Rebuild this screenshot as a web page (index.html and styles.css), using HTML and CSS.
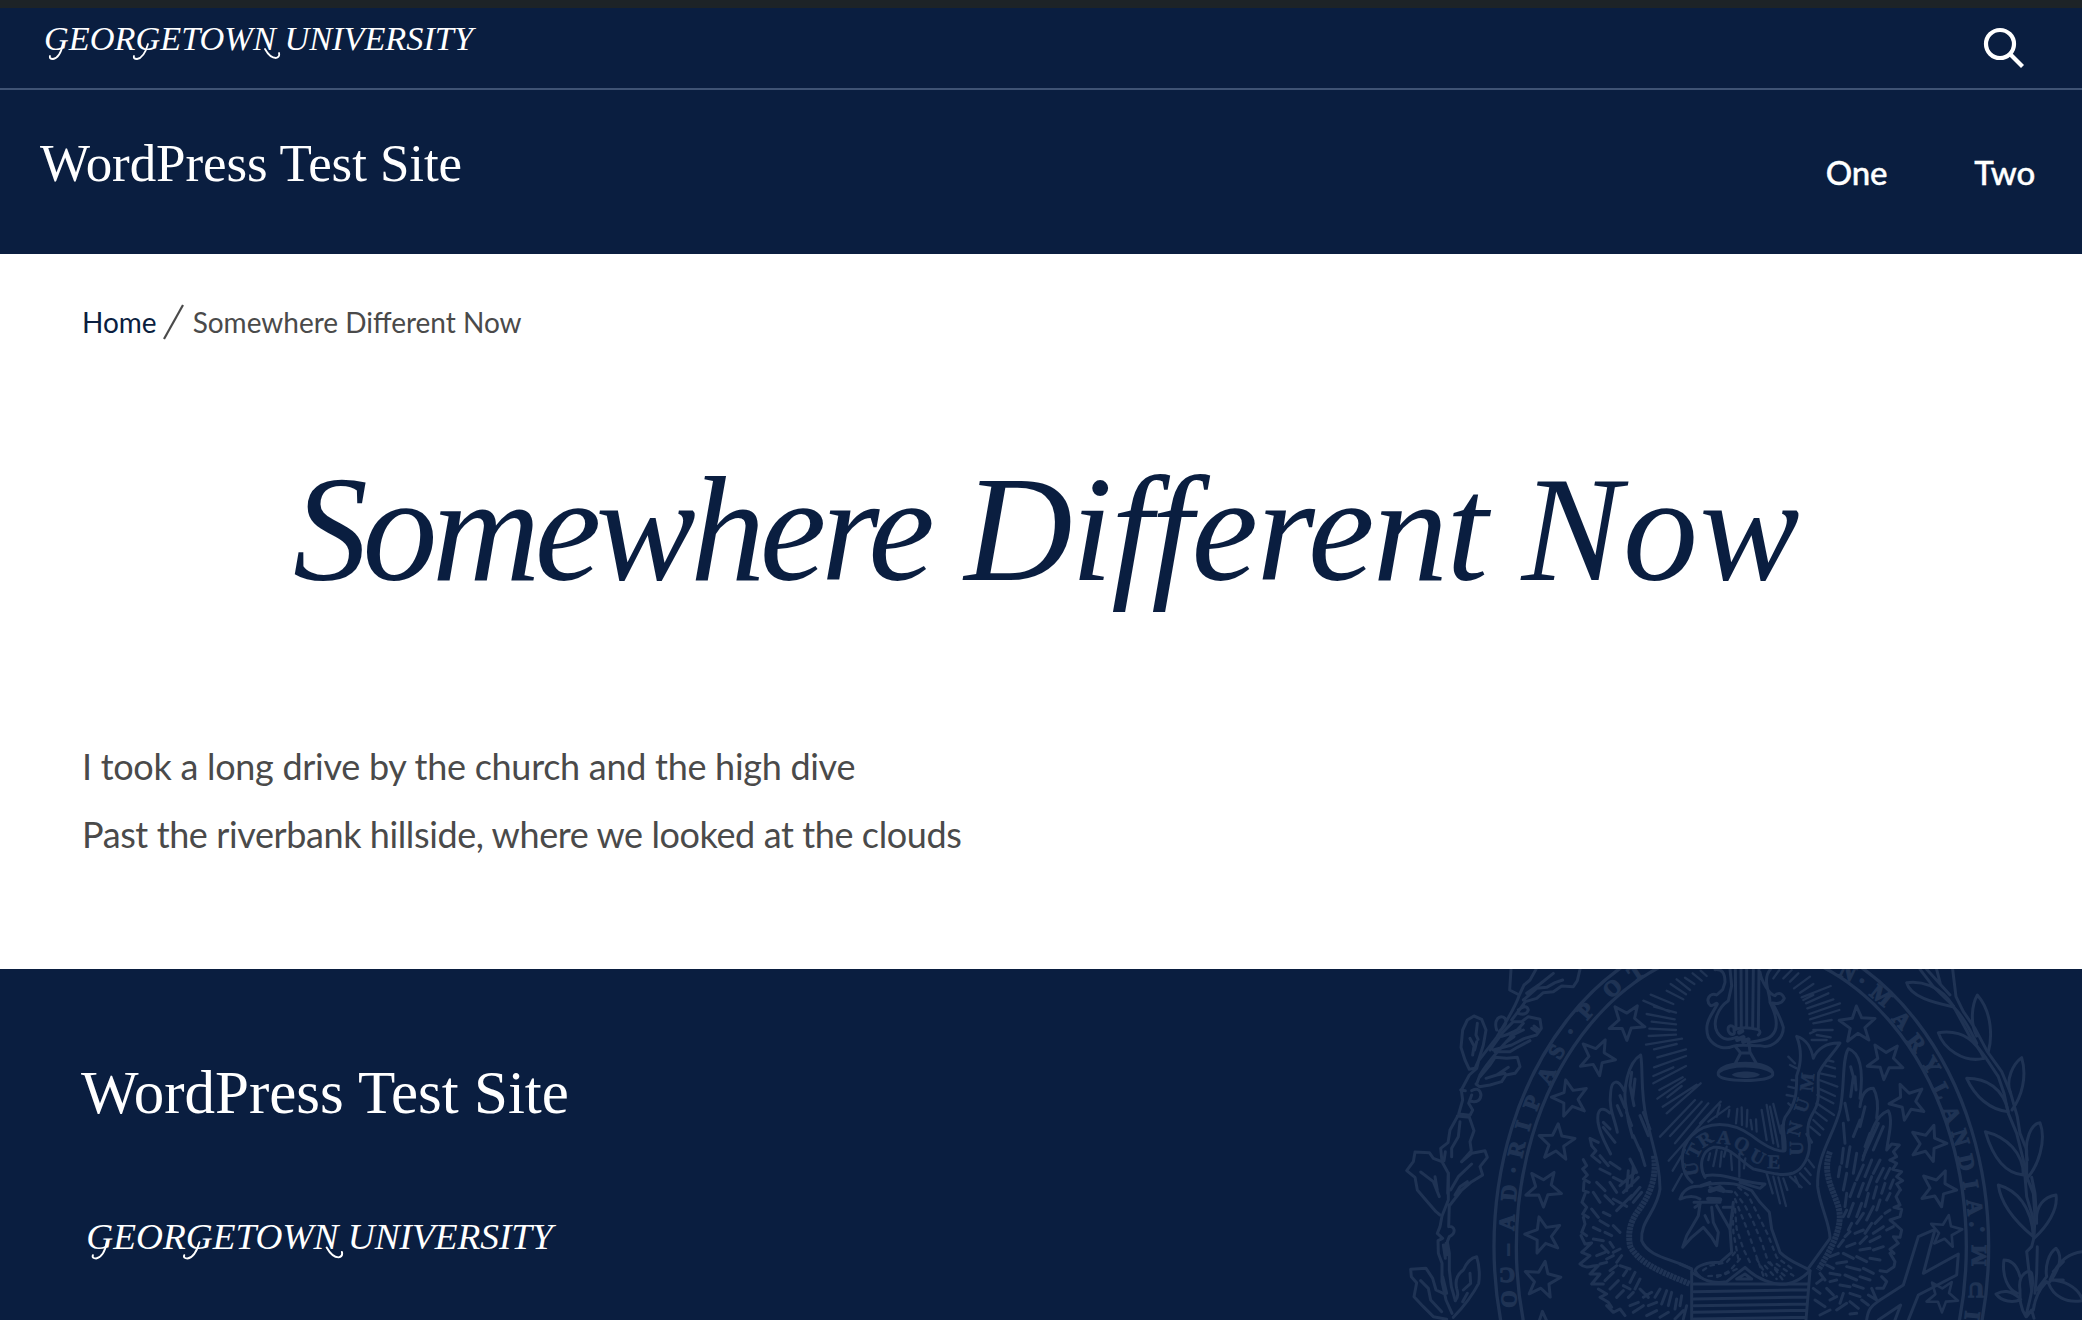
FILE: index.html
```html
<!DOCTYPE html>
<html lang="en">
<head>
<meta charset="utf-8">
<title>Somewhere Different Now</title>
<link rel="stylesheet" href="styles.css">
</head>
<body>
<div class="admin-bar"></div>
<header class="header">
  <div class="header-top">
    <svg class="wordmark" width="440" height="80" viewBox="0 0 440 80"><text x="1" y="42" font-size="33" textLength="429" lengthAdjust="spacingAndGlyphs">GEORGETOWN UNIVERSITY</text><path class="swash" d="M20 36Q17 50 10 51 6 51 7 48M105 36Q101 50 94 51 90 51 91 48M222 41Q227 50 233 50 237 49 236 45"/></svg>
    <svg class="search" width="44" height="44" viewBox="0 0 44 44"><circle cx="18" cy="18" r="14"/><path d="M28 28L40.500 40.500"/></svg>
  </div>
  <div class="header-main">
    <a class="site-title">WordPress Test Site</a>
    <nav class="nav"><a>One</a><a>Two</a></nav>
  </div>
</header>
<main class="main">
  <div class="crumbs">
    <a class="crumb-link">Home</a>
    <svg class="crumb-sep" width="24" height="38" viewBox="0 0 24 38"><path d="M2 36L21 2"/></svg>
    <span>Somewhere Different Now</span>
  </div>
  <h1 class="title"><span class="tight">Somewhere</span> <span class="wide">Different</span> <span class="wider">Now</span></h1>
  <div class="content">
    <p>I took a long drive by the church and the high dive</p>
    <p class="snug">Past the riverbank hillside, where we looked at the clouds</p>
  </div>
</main>
<footer class="footer">
  <div class="footer-info">
    <a class="footer-title">WordPress Test Site</a>
    <svg class="wordmark" width="479" height="87" viewBox="0 0 440 80"><text x="1" y="42" font-size="33" textLength="429" lengthAdjust="spacingAndGlyphs">GEORGETOWN UNIVERSITY</text><path class="swash" d="M20 36Q17 50 10 51 6 51 7 48M105 36Q101 50 94 51 90 51 91 48M222 41Q227 50 233 50 237 49 236 45"/></svg>
  </div>
  <svg class="seal" width="702" height="351" viewBox="0 27 2106 1053">
    <defs><path id="star" d="M0-54L14-18 54-14 22 12 32 50 0 28-32 50-22 12-54-14-14-18Z"/></defs>
    <!-- ring -->
    <g class="ring"><ellipse cx="1084" cy="860" rx="742" ry="958"/><ellipse cx="1084" cy="860" rx="675" ry="900"/></g>
    <g class="letters">
      <text transform="translate(388 1017) rotate(94)">O</text>
      <text transform="translate(381 945) rotate(180)">C</text>
      <text transform="translate(378 869) rotate(-90)">–</text>
      <text transform="translate(380 788) rotate(-88)">A</text>
      <text transform="translate(386 698) rotate(-85)">D</text>
      <text transform="translate(400 630) rotate(-80)">·</text>
      <text transform="translate(409 567) rotate(-77)">R</text>
      <text transform="translate(428 497) rotate(-74)">I</text>
      <text transform="translate(455 428) rotate(-70)">P</text>
      <text transform="translate(498 345) rotate(-64)">A</text>
      <text transform="translate(529 274) rotate(-60)">S</text>
      <text transform="translate(571 214) rotate(-54)">·</text>
      <text transform="translate(617 152) rotate(-49)">P</text>
      <text transform="translate(696 84) rotate(-42)">O</text>
      <text transform="translate(768 36) rotate(-34)">T</text>
      <text transform="translate(1403 35) rotate(26)">N</text>
      <text transform="translate(1446 62) rotate(34)">·</text>
      <text transform="translate(1504 106) rotate(39)">M</text>
      <text transform="translate(1566 180) rotate(47)">A</text>
      <text transform="translate(1610 248) rotate(52)">R</text>
      <text transform="translate(1654 315) rotate(58)">Y</text>
      <text transform="translate(1685 392) rotate(63)">L</text>
      <text transform="translate(1715 463) rotate(68)">A</text>
      <text transform="translate(1742 532) rotate(73)">N</text>
      <text transform="translate(1760 608) rotate(77)">D</text>
      <text transform="translate(1773 674) rotate(80)">I</text>
      <text transform="translate(1784 742) rotate(84)">A</text>
      <text transform="translate(1774 790)">·</text><text transform="translate(1807 805)">·</text>
      <text transform="translate(1794 886) rotate(-90)">M</text>
      <text transform="translate(1788 990) rotate(180)">U</text>
      <text transform="translate(1776 1066) rotate(-84)">I</text>
    </g>
    <!-- stars -->
    <g class="line">
      <use href="#star" transform="translate(742 182) rotate(34)"/>
      <use href="#star" transform="translate(652 288) rotate(26)"/>
      <use href="#star" transform="translate(570 412) rotate(-14)"/>
      <use href="#star" transform="translate(530 545) rotate(5)"/>
      <use href="#star" transform="translate(492 682) rotate(34)"/>
      <use href="#star" transform="translate(490 823) rotate(-14)"/>
      <use href="#star" transform="translate(487 957) rotate(9)"/>
      <use href="#star" transform="translate(490 1108) rotate(-3)"/>
      <use href="#star" transform="translate(1432 192) rotate(-3)"/>
      <use href="#star" transform="translate(1518 300) rotate(39)"/>
      <use href="#star" transform="translate(1582 422) rotate(-24)"/>
      <use href="#star" transform="translate(1645 547) rotate(18)"/>
      <use href="#star" transform="translate(1675 682) rotate(23)"/>
      <use href="#star" transform="translate(1698 812) rotate(10) scale(.88)"/>
      <use href="#star" transform="translate(1688 1005) rotate(35) scale(.88)"/>
    </g>
    <!-- oak branch -->
    <g class="line">
      <path d="M393 28L389 90 418 105 432 75 450 60 468 28M418 105C405 145 375 190 350 232L296 302 290 325 268 345 244 390 248 420 236 462 270 466 278 450 266 430 275 405M290 372L300 345C320 310 345 285 370 255L430 190M600 28L592 62 580 80 545 78 520 95 490 98 470 115 436 125 418 150 395 180M430 120L470 85 500 82 525 68 548 60M440 100L480 72 520 40M350 232Q380 228 420 205M350 210C340 180 360 160 375 175 385 195 365 205 358 215M415 150Q440 130 445 150 438 168 415 160"/>
      <path d="M282 168L305 178 318 210 310 255 296 300 285 325 268 328 255 300 243 262 248 210 262 180ZM292 190L288 225 294 238M270 235L282 258 278 285M284 270L290 245"/>
      <path d="M340 270L395 255 432 236 470 225 484 205 480 178 445 170 425 185 400 185 370 215 330 270M345 275L390 275 412 262 450 242M392 228L430 210M455 205L468 214M462 198L475 208M402 230L380 245"/>
      <path d="M300 350L330 315 345 292 380 295 412 292 420 320 405 340 378 345 365 365 330 375 298 380 288 372M318 355L350 345 385 322M350 345L375 340M275 392Q300 380 303 405 300 430 272 424M242 390L256 392"/>
      <path d="M232 468L268 472 282 512 270 545 274 572 245 605M232 470L210 510 204 548 182 565 186 605 205 640 203 700M240 485L235 530 215 565 215 590M196 575L192 602"/>
      <path d="M186 605L160 595 148 578 105 576 100 605 80 632 105 652 112 690 142 725 168 755 180 765M122 636L160 665 178 710M165 650L172 690M245 605L275 580 315 572 322 592 300 620 308 645 275 665 245 690 210 735M212 690L235 650 275 612M225 705L240 680 262 665"/>
      <path d="M205 640L205 720 186 768 180 800 172 820 188 835 174 842 175 880 186 910 186 965 198 1020 216 1060M208 735L206 800C222 795 232 818 208 830L202 845 208 880 208 930 214 980 226 1022M190 855L196 895M198 850L200 885M188 950L200 1000"/>
      <path d="M190 1000L168 990 158 955 138 925 92 928 94 950 110 968 102 1010 130 1040 160 1070 200 1078M122 962L145 985 152 1020 185 1055M226 1022Q238 1010 230 985 222 950 250 930 265 895 290 890 302 930 296 970 270 1020 220 1072M270 940L272 970 250 990M262 1000L248 1025"/>
    </g>
    <!-- laurel branch -->
    <g class="line" transform="translate(1050 0)">
      <path d="M570 28L610 80 670 138M590 28L660 105M620 28L632 75M668 28L678 110 700 155 735 205 772 275 815 335 842 400 862 470 870 520 890 570 890 650 910 700 915 770 912 832M670 138L720 230 765 290 805 350 822 400 835 460 860 520 880 600 885 650 890 710 905 760 912 832 905 860 890 875 897 935 905 990M922 860L920 940 915 1000M905 652L915 700 920 780"/>
      <path d="M670 138C630 75 570 62 530 68 540 110 610 128 668 140 700 165 730 230 740 250M740 228C720 190 725 135 742 105 790 160 785 240 775 275M762 295C730 225 680 210 625 218 640 265 700 310 762 295M842 400C825 360 850 310 875 293 892 350 875 410 846 450M835 455C820 385 770 355 710 355 735 410 780 450 835 455M892 600C880 540 905 490 930 488 950 540 925 620 890 655M880 645C880 580 830 530 766 515 785 580 820 640 880 645M920 790C915 735 945 710 978 705 985 750 950 800 912 835M910 830C905 740 860 690 805 675 812 730 850 780 910 830"/>
      <path d="M870 990C862 940 900 925 905 940 915 980 895 1030 888 1070 868 1040 870 1010 870 990ZM870 950C860 910 840 900 822 900 815 950 835 990 862 1000M870 1015C840 990 820 990 798 1002 815 1025 850 1030 872 1018M910 1050C915 1010 935 980 950 965M920 990L950 950C945 920 955 880 978 865 1000 890 985 930 960 965M960 960C980 910 1010 880 1056 875M960 960C1000 960 1040 980 1056 1015M955 968C970 1010 1010 1030 1056 1022M972 960L1000 960M970 935L1000 905M890 1070L905 1050 912 1075"/>
    </g>
    <!-- rays of glory -->
    <g class="ray">
      <path d="M915 53L943 72M938 40L965 62M962 32L980 48M890 58L930 90M872 72L918 103M860 92L910 118M812 104L880 132M790 122L868 155M822 140L888 158M800 162L884 178M815 185L888 193M808 206L888 210M806 228L888 224M798 254L906 236M822 268L890 252M832 292L918 268M822 322L918 288M820 348L880 322M820 370L918 318M838 390L908 352M832 416L915 358M862 412L905 378M848 440L950 374M860 460L962 370M840 530L945 420M870 528L965 425M885 550L985 430M866 602L1000 450M878 632L915 570M878 692L906 642M960 490L1022 425M985 485L1048 440M1010 470L1020 435"/>
      <path d="M1045 470L1048 450M1068 490L1072 447M1086 495L1085 442M1100 500L1102 450M1116 508L1112 480M1130 515L1128 478M1160 540L1145 450M1180 550L1160 435M1195 560L1170 440M1202 520L1180 432M1040 560L1032 590M1010 570L1000 618M1025 575L1020 620M1052 575L1056 630M990 580L985 600M1078 582L1078 650M1096 595L1092 625"/>
      <path d="M1160 640L1178 700M1180 650L1200 730M1195 652L1218 738M1210 655L1222 690M1230 650L1265 682M1245 650L1258 680M1260 640L1290 672M1275 625L1292 645M1285 600L1302 622M1290 500L1320 525M1300 480L1330 508M1305 455L1340 482M1310 430L1362 465M1312 405L1360 430M1315 385L1365 408M1318 360L1372 380M1320 340L1365 350M1330 315L1365 325M1340 300L1360 305M1225 290L1245 310M1230 315L1250 325M1235 360L1250 362M1225 380L1248 385M1220 405L1245 410M1225 430L1236 440"/>
      <path d="M1210 55L1235 30M1230 65L1255 40M1242 85L1290 50M1260 98L1300 72M1265 112L1352 78M1278 130L1345 100M1282 145L1360 118M1288 162L1380 130M1290 178L1378 150M1300 190L1355 180M1300 210L1358 210M1310 225L1352 232M1295 240L1340 240M1290 220L1312 210M1180 55L1198 30M1270 120L1300 105"/>
    </g>
    <!-- lyre -->
    <g class="line" transform="translate(900 27)">
      <path d="M166 0L168 175M183 0L184 175M200 0L200 175M220 0L218 175M237 0L235 178M105 2C125 0 135 10 135 40L128 62 110 78C88 68 75 95 92 110 100 112 108 98 112 105 95 140 70 160 85 205 105 240 140 240 158 232 175 225 215 230 240 230 275 240 310 210 310 175 300 140 285 120 278 102 290 105 305 105 313 88 305 68 290 72 285 80 270 78 245 40 240 10M150 0L155 50 145 95C115 115 95 160 112 190 135 225 160 205 172 205M272 0C245 30 270 70 270 100 285 130 300 175 275 200 255 220 225 212 205 222M145 185C140 165 165 165 162 185 168 200 150 200 145 185ZM165 182Q190 170 235 182 245 190 235 198"/>
      <path d="M166 232L182 252 165 285M208 230L210 250 230 285M180 252L210 252M165 285C125 292 112 305 115 318 125 340 265 340 278 318 280 300 260 290 230 285 205 282 185 282 165 285M115 310C150 285 240 285 278 310"/>
      <path class="solid" d="M155 317C170 304 225 304 240 317 225 330 170 330 155 317Z"/>
      <path class="heavy" d="M172 212L190 205M190 218L205 212M178 190L186 186"/>
    </g>
    <!-- ribbon -->
    <g class="line" transform="translate(900 27)">
      <path d="M36 640C0 610 -5 540 35 500 80 455 155 455 215 500 260 535 290 550 315 545 320 500 300 480 315 445 350 400 350 370 350 320 365 280 365 240 350 202 380 210 395 240 400 268 410 240 440 220 480 222 460 255 430 280 416 312 410 360 425 390 400 430 375 470 385 500 388 525 390 560 370 600 340 612 300 625 250 605 220 600 180 575 150 530 100 535 65 545 55 590 75 625M310 545L305 470"/>
      <path d="M380 495L395 520"/>
    </g>
    <g class="motto">
      <text transform="translate(934 627) rotate(-98)">U</text><text transform="translate(942 572) rotate(-62)">T</text>
      <text transform="translate(975 537) rotate(-32)">R</text><text transform="translate(1032 532) rotate(5)">A</text>
      <text transform="translate(1086 552) rotate(28)">Q</text><text transform="translate(1133 590) rotate(28)">U</text>
      <text transform="translate(1182 605) rotate(2)">E</text><text transform="translate(1248 565) rotate(-90)">U</text>
      <text transform="translate(1244 506) rotate(-76)">N</text><text transform="translate(1265 436) rotate(-72)">U</text>
      <text transform="translate(1281 366) rotate(-84)">M</text>
    </g>
    <!-- left wing -->
    <g class="line" transform="translate(600 27)">
      <path d="M182 258C145 280 125 360 140 425 145 470 155 490 158 505M182 258C190 300 180 370 200 450 220 540 240 590 240 660 230 730 180 755 185 815 205 865 280 870 335 900M132 365C115 330 95 330 92 370 85 420 105 450 112 490M90 432C65 410 50 420 54 460 60 500 80 530 92 555M55 520L30 508 35 530 48 545 35 560 60 580"/>
      <path class="rough" d="M222 560C232 640 200 690 175 725 145 765 145 800 150 830 175 885 260 915 330 945"/>
      <path d="M10 572L20 590 8 600 22 618 10 630 28 640M12 640L10 665 25 670M15 675L6 700 20 715 8 735 25 745M10 745L15 765 5 790 20 800M3 800L15 825 35 822 5 850 30 860 0 885C20 905 45 885 55 890L30 915 60 915 35 945 70 945M55 960L80 975 60 985 85 1000 95 1015M80 1010L100 1030 120 1020 135 1040"/>
      <path d="M155 310L150 350 162 410M165 330L158 390M120 380L135 415M112 410L125 440M70 460L90 480M70 475L105 520M140 430L155 470M180 440L205 500M190 430L210 480M160 500L180 545M180 540L195 590M150 570L170 610M165 610L120 650M175 625L130 670M160 590L155 650M145 605L140 665M185 670L160 700M180 655L150 690M110 725L155 680M100 690L140 712M60 560L85 590M90 580L120 600M60 600L90 615M100 625L130 640M50 640L75 665M90 640L110 670M40 670L60 700M75 680L100 705M35 720L55 745M70 730L90 740M60 755L85 770M40 775L60 785M75 790L95 800M100 770L120 790M40 810L70 815M90 820L100 835M65 830L85 850M100 850L120 840M50 860L75 850M80 870L100 860M110 880L125 860M60 885L80 880M90 905L110 890M120 890L150 900M75 935L100 910M130 920L140 905M150 940L165 910M90 960L115 935M130 950L150 960M165 960L180 930M110 985L130 965M145 985L160 970M180 960L205 985M190 985L215 970M150 1010L175 1000M160 1030L190 1010M225 985L240 960M205 1010L230 1000M245 1005L260 965M265 1010L275 970M200 1040L230 1025M240 1045L265 1030M285 1020L290 990M300 1010L305 980M285 1050L310 1025M310 1050L320 1010"/>
    </g>
    <!-- right wing -->
    <g class="line" transform="translate(1050 0)">
      <path d="M390 415C400 340 395 280 355 266 335 300 345 380 330 450 310 530 260 580 263 680 270 740 300 790 300 835L235 925M390 440C395 400 410 385 430 385 445 410 445 440 440 475M398 600C420 530 430 470 475 452 490 480 475 530 470 570M470 570L485 552 508 555 490 575 500 590 480 600"/>
      <path class="rough" d="M300 575C275 640 310 690 325 740 340 790 315 850 265 930"/>
      <path d="M480 600L500 610 488 628 515 635 500 650 518 662 500 672 512 690M510 690L498 710 510 735 492 742 515 748 510 770 480 780 498 795 515 810 510 832 490 830 505 850M505 850L480 868 492 880M480 880L495 905 492 920 470 935 450 932M455 950L470 965 460 985 440 985M425 985L440 1020 415 1005M380 1060L360 1062"/>
      <path d="M362 320L370 350 362 410M375 350L378 390M345 430L355 480M340 490L345 550M390 480L370 530M405 440L390 500M445 490L400 590M460 500L430 570M420 520L405 560M340 565L335 610M360 560L350 620M380 580L370 640M330 620L325 650M400 615L380 660M425 600L405 650M450 600L430 640M350 640L340 690M375 670L360 710M400 670L385 710M425 650L410 690M460 625L440 665M480 625L465 655M350 700L345 740M370 730L355 770M395 730L380 770M415 700L405 740M440 680L430 715M465 670L455 700M490 660L480 685M340 770L350 750M365 790L355 810M380 790L400 760M410 780L430 740M440 750L450 720M470 720L480 700M345 830L360 815M375 820L400 810M405 820L425 790M435 790L455 770M465 760L480 750M390 850L410 830M420 845L450 830M430 820L460 800M470 810L490 800M350 860L375 850M390 870L420 865M430 870L460 860M325 860L340 840M300 890L325 880M340 880L370 895M380 890L410 905M420 895L450 900M320 910L350 905M290 915L310 925M350 920L390 930M400 925L430 940M270 940L285 960M300 940L330 945M345 945L380 960M390 950L420 960M260 970L280 955M300 965L320 960M330 975L360 980M370 975L400 985M290 985L310 1005M250 985L270 1000M340 1000L330 1030M360 1000L390 1010M255 1020L285 1040M300 1020L320 1010M320 1050L350 1030M270 1065L300 1050M360 1025L385 1045M395 1020L415 1035"/>
    </g>
    <!-- eagle -->
    <g class="line" transform="translate(900 27)">
      <path d="M75 620C130 610 180 640 255 645L240 658 180 640M0 690C10 660 35 650 62 652 95 640 160 640 180 650L215 665 240 700 268 730 275 780 300 850C330 880 370 890 390 905M0 690C25 680 45 680 60 690M42 700L120 700M45 715L60 705M62 650L90 640M90 655L120 665 155 668M160 700L150 780 155 850 120 880C80 880 50 890 45 905 60 935 100 945 140 938L195 895C230 930 280 950 320 945 350 940 370 925 390 905"/>
      <path d="M60 705L55 740 20 800 8 835 35 805 70 775 95 805 110 830 115 790 100 760 95 715M75 740L85 760M110 710L150 780M130 715L160 715"/>
      <path class="heavy" d="M90 665L120 655 130 665M85 690L120 692"/>
    </g>
    <g class="tuft" transform="translate(900 27)">
      <path d="M175 655L205 680 235 740 265 800 290 865 345 905"/><path d="M165 670L195 710 220 760 245 820 265 880 320 925"/>
      <path d="M165 690L185 740 205 790 225 850 250 920"/><path d="M165 720L170 780 190 840 215 890"/><path d="M158 730L160 790 175 870"/>
      <path d="M165 850L140 880 90 890 60 910"/><path d="M180 870L150 905 110 925"/><path d="M170 900L130 918 80 922"/>
      <path d="M255 890L290 930M270 880L310 935M290 885L340 920M230 870L260 920"/>
    </g>
    <!-- shield -->
    <g class="line" transform="translate(900 27)">
      <path d="M0 885L35 900V1053M390 905L378 1053M170 930L195 915 215 930ZM35 910L60 925M42 945H382M42 968L382 962M42 990L380 984M42 1010L380 1005M42 1030L380 1024M42 1050L378 1045"/>
    </g>
    <!-- cross -->
    <g class="line" transform="translate(1050 0)"><path d="M410 1080C415 1040 430 1035 450 1020L520 975 565 830 615 808 580 940 685 882 680 945 565 1005 535 1080M445 1080L512 1035 495 1080"/></g>
  </svg>
</footer>
</body>
</html>
```

FILE: styles.css
```css
* { box-sizing: border-box; margin: 0; padding: 0; }
body { background: #fff; color: #4a4a4a; font-family: Lato, "Open Sans", sans-serif; height: 1320px; overflow: hidden; display: flex; flex-direction: column; }
.admin-bar { height: 8px; background: #1d2327; }
.header { background: #0a1e40; color: #fff; }
.header-top { height: 82px; border-bottom: 2px solid #3f5374; display: flex; justify-content: space-between; align-items: flex-start; padding: 0 56px 0 43px; }
.wordmark { display: block; fill: #fff; font-family: "Liberation Serif", serif; font-style: italic; }
.swash { fill: none; stroke: #fff; stroke-width: 1.800; stroke-linecap: round; }
.search { margin-top: 18px; fill: none; stroke: #fff; stroke-width: 4.200; }
.header-main { height: 164px; display: flex; justify-content: space-between; align-items: center; padding: 0 47px 0 40px; }
.site-title { font: 53px/60px "Liberation Serif", serif; letter-spacing: -0.100px; margin-bottom: 18px; }
.nav { display: flex; gap: 87px; font-size: 33px; font-weight: 500; line-height: 40px; letter-spacing: -0.200px; -webkit-text-stroke: 0.400px #fff; }
.main { height: 715px; padding: 48px 82px 0; }
.crumbs { display: flex; align-items: center; height: 40px; font-size: 28px; line-height: 40px; }
.crumb-link { color: #0a1e40; }
.crumb-sep { margin: 0 7px 0 5px; fill: none; stroke: #4a4a4a; stroke-width: 2.200; }
.title { margin-top: 97px; padding-left: 12px; text-align: center; white-space: nowrap; color: #0a1e40; font: italic 400 150px/180px "Liberation Serif", serif; letter-spacing: -2.700px; }
.tight { letter-spacing: -5.500px; }
.wide { letter-spacing: -1.500px; }
.wider { letter-spacing: 1.500px; }
.content { margin-top: 113px; font-size: 36px; line-height: 68px; letter-spacing: -0.290px; }
.snug { letter-spacing: -0.400px; }
.footer { height: 351px; background: #0a1e40; color: #fff; display: flex; justify-content: space-between; padding-left: 81px; }
.footer-info { display: flex; flex-direction: column; padding-top: 89px; gap: 75px; }
.footer-title { font: 61px/70px "Liberation Serif", serif; }
.footer .wordmark { margin-left: 4px; }
.seal { flex: none; }
.ring { fill: none; stroke: #1f3354; stroke-width: 10; }
.line { fill: none; stroke: #1f3354; stroke-width: 9; stroke-linejoin: round; stroke-linecap: round; }
.ray { fill: none; stroke: #1f3354; stroke-width: 7; stroke-linecap: round; }
.solid { fill: #1f3354; stroke: none; }
.heavy { stroke-width: 14; }
.rough { stroke-width: 18; stroke-dasharray: 9 2; stroke-linecap: butt; }
.tuft { fill: none; stroke: #1f3354; stroke-width: 7; stroke-linecap: round; stroke-dasharray: 11 15; }
.letters text { fill: #1f3354; stroke: #1f3354; stroke-width: 4; font: bold 66px "Liberation Serif", serif; text-anchor: middle; dominant-baseline: central; }
.motto text { fill: #1f3354; stroke: #1f3354; stroke-width: 2; font: bold 58px "Liberation Serif", serif; text-anchor: middle; dominant-baseline: central; }
```
